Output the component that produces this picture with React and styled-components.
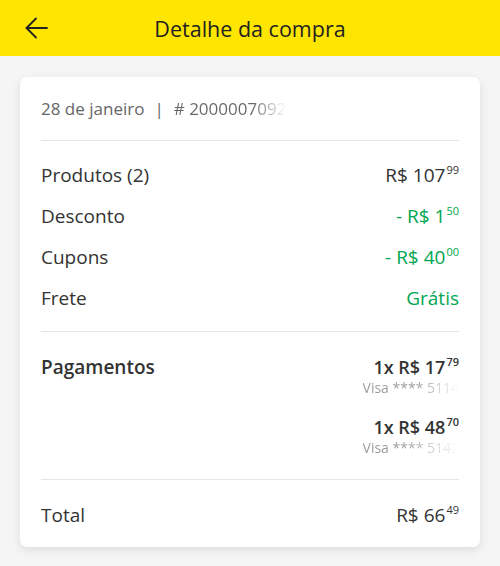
import React from 'react';
import styled, { createGlobalStyle } from 'styled-components';

const GlobalStyle = createGlobalStyle`
  html, body {
    margin: 0;
    padding: 0;
    background: #f5f5f5;
    font-family: "Open Sans", Lato, sans-serif;
    color: #333;
  }
`;

const Page = styled.div`
  width: 500px;
  height: 566px;
  overflow: hidden;
  background: #f5f5f5;
`;

const Header = styled.header`
  height: 56px;
  background: #ffe600;
  display: grid;
  grid-template-columns: 56px 1fr 56px;
  align-items: center;
`;

const BackButton = styled.button`
  border: 0;
  background: none;
  padding: 0;
  margin-left: 25px;
  width: 23px;
  height: 22px;
  display: flex;
  align-items: center;
  justify-content: center;
  color: #222;
`;

const Title = styled.h1`
  margin: 0;
  text-align: center;
  font-size: 21.5px;
  font-weight: 400;
  color: #222;
`;

const Card = styled.section`
  margin: 21px 20px 0;
  background: #fff;
  border-radius: 7px;
  box-shadow: 0 3px 10px rgba(0, 0, 0, 0.1);
  padding: 0 21px;
`;

const Meta = styled.div`
  height: 63px;
  display: flex;
  align-items: center;
  gap: 10px;
  font-size: 17px;
  color: #666;
  border-bottom: 1px solid #e6e6e6;
`;

const Faded = styled.span`
  background: linear-gradient(to right, ${p => p.color || '#666'} ${p => p.stop || '75%'}, rgba(255,255,255,0) 100%);
  -webkit-background-clip: text;
  background-clip: text;
  color: transparent;
`;

const Section = styled.div`
  padding: ${p => p.pad || '14px 0'};
  border-bottom: ${p => (p.last ? 'none' : '1px solid #e6e6e6')};
`;

const Row = styled.div`
  display: flex;
  justify-content: space-between;
  align-items: ${p => p.top ? 'flex-start' : 'center'};
  height: ${p => p.h || '41px'};
  font-size: 19px;
  line-height: 26px;
`;

const Label = styled.span`
  font-weight: ${p => (p.bold ? 600 : 400)};
  color: #333;
`;

const Value = styled.span`
  color: ${p => (p.green ? '#00a650' : '#333')};
  font-weight: ${p => (p.bold ? 600 : 400)};
`;

const Cents = styled.span`
  font-size: 11px;
  line-height: 0;
  position: relative;
  top: -8px;
  margin-left: 1px;
`;

const Payments = styled.div`
  display: flex;
  flex-direction: column;
  align-items: flex-end;
  gap: 18px;
  padding-top: 2px;
`;

const Payment = styled.div`
  display: flex;
  flex-direction: column;
  align-items: flex-end;
`;

const Amount = styled.span`
  font-size: 18px;
  font-weight: 600;
  line-height: 22px;
  color: #333;
`;

const Card4 = styled.span`
  font-size: 14px;
  line-height: 20px;
  color: #999;
`;

function Price({ int, cents, prefix = 'R$ ', ...rest }) {
  return (
    <Value {...rest}>
      {prefix}{int}<Cents>{cents}</Cents>
    </Value>
  );
}

function App() {
  return (
    <Page>
      <GlobalStyle />
      <Header>
        <BackButton aria-label="Voltar">
          <svg width="23" height="22" viewBox="0 0 23 22" fill="none" stroke="currentColor" strokeWidth="1.8" strokeLinecap="round" strokeLinejoin="round">
            <path d="M22 11H1.5" />
            <path d="M11 1.5L1.5 11l9.5 9.5" />
          </svg>
        </BackButton>
        <Title>Detalhe da compra</Title>
        <span />
      </Header>

      <Card>
        <Meta>
          <span>28 de janeiro</span>
          <span>|</span>
          <Faded stop="70%"># 2000007092</Faded>
        </Meta>

        <Section pad="13px 0 13px">
          <Row>
            <Label>Produtos (2)</Label>
            <Price int="107" cents="99" />
          </Row>
          <Row>
            <Label>Desconto</Label>
            <Price green prefix="- R$ " int="1" cents="50" />
          </Row>
          <Row>
            <Label>Cupons</Label>
            <Price green prefix="- R$ " int="40" cents="00" />
          </Row>
          <Row>
            <Label>Frete</Label>
            <Value green>Grátis</Value>
          </Row>
        </Section>

        <Section pad="22px 0 21px">
          <Row top h="auto">
            <Label bold>Pagamentos</Label>
            <Payments>
              <Payment>
                <Amount>1x R$ 17<Cents>79</Cents></Amount>
                <Card4><Faded color="#999" stop="55%">Visa **** 5114</Faded></Card4>
              </Payment>
              <Payment>
                <Amount>1x R$ 48<Cents>70</Cents></Amount>
                <Card4><Faded color="#999" stop="40%">Visa **** 5142</Faded></Card4>
              </Payment>
            </Payments>
          </Row>
        </Section>

        <Section last pad="17px 0 15px">
          <Row h="35px">
            <Label>Total</Label>
            <Price int="66" cents="49" />
          </Row>
        </Section>
      </Card>
    </Page>
  );
}

export default App;
